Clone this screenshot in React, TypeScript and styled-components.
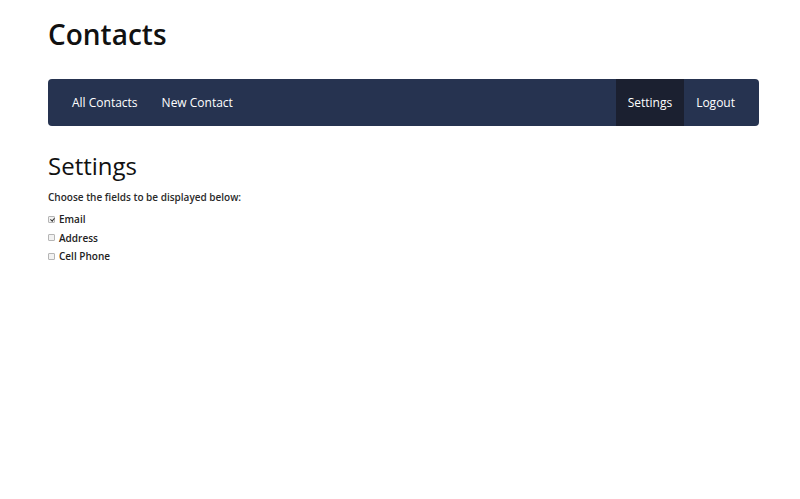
import React from "react";
import styled, { createGlobalStyle } from "styled-components";

const Global = createGlobalStyle`
  html, body { margin: 0; padding: 0; background: #fff; }
  body { font-family: "Open Sans", "Liberation Sans", sans-serif; color: #222; }
`;

const Page = styled.div`
  padding: 0 41px 0 48px;
`;

const Title = styled.h1`
  margin: 0;
  padding-top: 15px;
  font-size: 28px;
  font-weight: 600;
  line-height: 38px;
  color: #111;
`;

const NavBar = styled.nav`
  margin-top: 26px;
  height: 47px;
  background: #263350;
  border-radius: 4px;
  display: flex;
  align-items: stretch;
  justify-content: space-between;
  padding: 0 12px;
`;

const NavGroup = styled.div`
  display: flex;
  align-items: stretch;
`;

const NavLink = styled.a<{ $active?: boolean }>`
  display: flex;
  align-items: center;
  padding: 0 12px;
  font-size: 12px;
  font-weight: 500;
  color: #fff;
  text-decoration: none;
  background: ${(p) => (p.$active ? "#1b2030" : "transparent")};
`;

const Heading = styled.h2`
  margin: 25px 0 0;
  font-size: 24px;
  font-weight: 400;
  line-height: 30px;
  color: #111;
`;

const Prompt = styled.p`
  margin: 9px 0 6px;
  font-size: 10px;
  font-weight: 600;
  color: #2a2a2a;
`;

const Option = styled.label`
  display: flex;
  align-items: center;
  gap: 4px;
  height: 18.5px;
  font-size: 10px;
  font-weight: 600;
  color: #222;
`;

const Box = styled.input`
  appearance: none;
  margin: 0;
  width: 7px;
  height: 7px;
  border: 1px solid #b5b5b5;
  border-radius: 1px;
  background: #f2f2f2;
  box-sizing: border-box;
  position: relative;
  &:checked::after {
    content: "";
    position: absolute;
    left: 1.5px;
    top: 0px;
    width: 1.5px;
    height: 3px;
    border: solid #333;
    border-width: 0 1.2px 1.2px 0;
    transform: rotate(40deg);
  }
`;

export default function App() {
  return (
    <>
      <Global />
      <Page>
        <Title>Contacts</Title>
        <NavBar>
          <NavGroup>
            <NavLink>All Contacts</NavLink>
            <NavLink>New Contact</NavLink>
          </NavGroup>
          <NavGroup>
            <NavLink $active>Settings</NavLink>
            <NavLink>Logout</NavLink>
          </NavGroup>
        </NavBar>
        <Heading>Settings</Heading>
        <Prompt>Choose the fields to be displayed below:</Prompt>
        <Option><Box type="checkbox" defaultChecked />Email</Option>
        <Option><Box type="checkbox" />Address</Option>
        <Option><Box type="checkbox" />Cell Phone</Option>
      </Page>
    </>
  );
}
